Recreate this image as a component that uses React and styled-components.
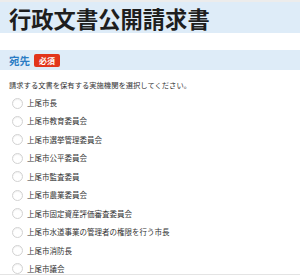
import React, { useState } from 'react';
import styled, { createGlobalStyle } from 'styled-components';

const GlobalStyle = createGlobalStyle`
  body {
    margin: 0;
    background: #fff;
    font-family: "Noto Sans CJK JP", "Noto Sans", sans-serif;
  }
`;

const Page = styled.div`
  width: 300px;
  height: 276px;
  overflow: hidden;
  border-top: 2px solid #ececec;
  box-sizing: border-box;
`;

const TitleBar = styled.h1`
  margin: 0;
  height: 31px;
  padding: 0 9px;
  display: flex;
  align-items: center;
  background: #deecf8;
  font-size: 22.3px;
  font-weight: 700;
  color: #1e1e1e;
`;

const Section = styled.section`
  margin-top: 17px;
`;

const SectionHead = styled.div`
  height: 20px;
  padding: 0 9px;
  display: flex;
  align-items: center;
  gap: 4px;
  background: #deecf8;
`;

const SectionLabel = styled.span`
  font-size: 10.5px;
  font-weight: 700;
  color: #2a7cc4;
`;

const Badge = styled.span`
  display: inline-flex;
  align-items: center;
  justify-content: center;
  width: 26px;
  height: 13px;
  border-radius: 2px;
  background: #e2351b;
  color: #fff;
  font-size: 8px;
  font-weight: 700;
`;

const Note = styled.p`
  margin: 10px 0 0;
  padding: 0 9px;
  font-size: 7.3px;
  line-height: 10px;
  color: #333;
`;

const List = styled.div`
  margin-top: 8px;
  display: flex;
  flex-direction: column;
  gap: 8.45px;
  border-bottom: 1px solid #e4e4e4;
`;

const Row = styled.label`
  height: 10px;
  padding-left: 12px;
  display: flex;
  align-items: center;
  gap: 4px;
  cursor: pointer;
`;

const Circle = styled.span`
  width: 11px;
  height: 11px;
  box-sizing: border-box;
  border-radius: 50%;
  border: 1px solid ${p => (p.checked ? '#2a7cc4' : '#d2d2d2')};
  background: ${p => (p.checked ? 'radial-gradient(#2a7cc4 40%, #fff 45%)' : '#fff')};
  box-shadow: inset 0 1px 1px rgba(0, 0, 0, 0.06);
  flex-shrink: 0;
`;

const Text = styled.span`
  font-size: 7.5px;
  line-height: 10px;
  color: #333;
`;

const agencies = [
  '上尾市長',
  '上尾市教育委員会',
  '上尾市選挙管理委員会',
  '上尾市公平委員会',
  '上尾市監査委員',
  '上尾市農業委員会',
  '上尾市固定資産評価審査委員会',
  '上尾市水道事業の管理者の権限を行う市長',
  '上尾市消防長',
  '上尾市議会',
];

export default function App() {
  const [selected, setSelected] = useState(null);

  return (
    <>
      <GlobalStyle />
      <Page>
        <TitleBar>行政文書公開請求書</TitleBar>
        <Section>
          <SectionHead>
            <SectionLabel>宛先</SectionLabel>
            <Badge>必須</Badge>
          </SectionHead>
          <Note>請求する文書を保有する実施機関を選択してください。</Note>
          <List>
            {agencies.map((name, i) => (
              <Row key={name} onClick={() => setSelected(i)}>
                <Circle checked={selected === i} />
                <Text>{name}</Text>
              </Row>
            ))}
          </List>
        </Section>
      </Page>
    </>
  );
}
